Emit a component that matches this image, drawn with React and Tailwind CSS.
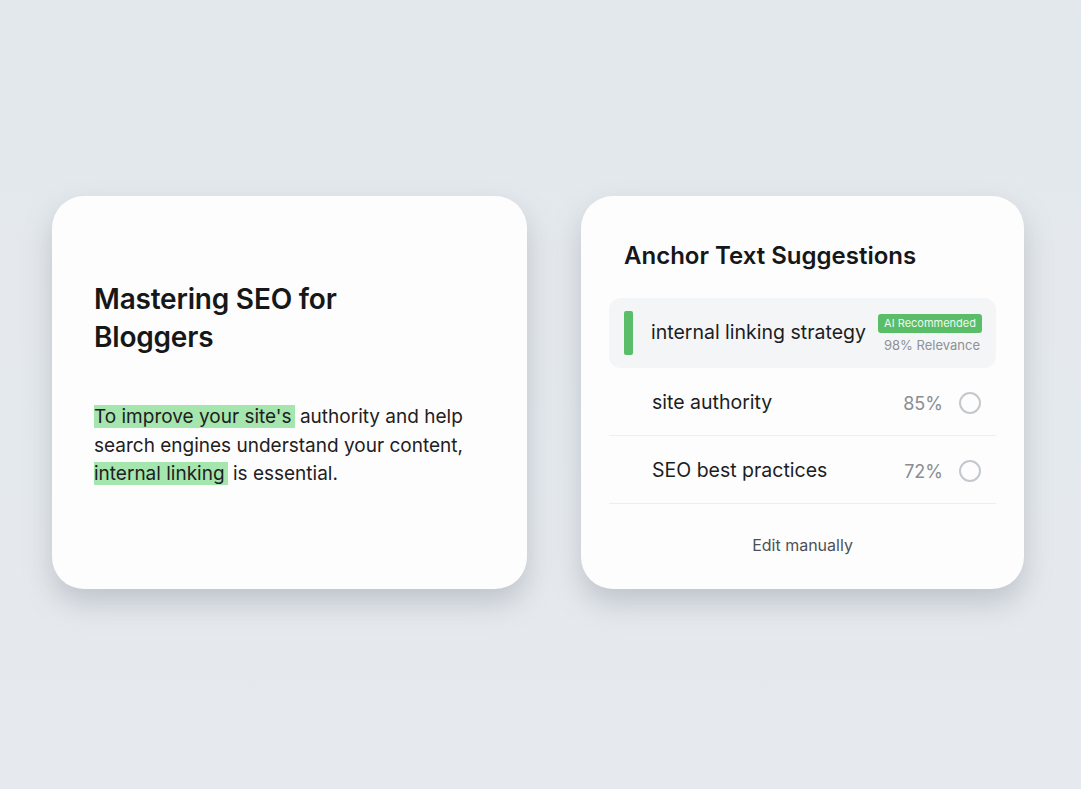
import React from 'react';

const font = { fontFamily: 'Inter, "Noto Sans", sans-serif' };

function Row({ label, pct, last }) {
    return (
        <div className={`flex items-center h-[68px] pl-[43px] pr-[15px] pt-[3px] ${last ? '' : 'border-b border-[#eceef1]'}`}>
            <span className="flex-1 text-[19.5px] text-[#1c1d1f]">{label}</span>
            <span className="text-[18px] text-[#8a8d91] mr-[16px]">{pct}</span>
            <span className="w-[22px] h-[22px] rounded-full border-2 border-[#c4c8cd]" />
        </div>
    );
}

export default function App() {
    return (
        <div className="w-[1081px] h-[789px] bg-gradient-to-b from-[#e3e8ec] to-[#e6eaee] flex items-start pt-[196px] pl-[52px] gap-[54px]" style={font}>
            <div className="w-[475px] h-[393px] rounded-[32px] bg-[#fdfdfd] shadow-[0_14px_28px_rgba(120,130,140,0.35)] pl-[42px] pr-[30px] pt-[84px]">
                <h1 className="text-[28px] leading-[38px] font-semibold text-[#161718] tracking-[-0.2px] w-[300px]">
                    Mastering SEO for Bloggers
                </h1>
                <p className="mt-[47px] text-[19px] leading-[28.5px] text-[#1f2022]">
                    <span className="bg-[#a4e6ad] pr-[3px]">To improve your site's</span> authority and help search engines understand your content,{' '}
                    <span className="bg-[#a4e6ad] pr-[3px]">internal linking</span> is essential.
                </p>
            </div>

            <div className="w-[443px] h-[393px] rounded-[32px] bg-[#fdfdfd] shadow-[0_14px_28px_rgba(120,130,140,0.35)] px-[28px] pt-[44px]">
                <h2 className="pl-[15px] text-[24px] leading-[32px] font-semibold text-[#161718]">Anchor Text Suggestions</h2>
                <div className="mt-[26px] h-[70px] rounded-[12px] bg-[#f4f5f7] flex items-center pl-[15px] pr-[14px]">
                    <span className="w-[9px] h-[44px] rounded-[2px] bg-[#5abd68]" />
                    <span className="ml-[18px] flex-1 text-[19.5px] text-[#1c1d1f]">internal linking strategy</span>
                    <div className="flex flex-col items-end gap-[5px]">
                        <span className="bg-[#5abd68] text-[#eef8ef] text-[11px] leading-[19px] px-[6px] rounded-[3px]">AI Recommended</span>
                        <span className="text-[13px] leading-[15px] text-[#8e9196] pr-[2px]">98% Relevance</span>
                    </div>
                </div>
                <Row label="site authority" pct="85%" />
                <Row label="SEO best practices" pct="72%" last={false} />
                <div className="text-center text-[16px] text-[#4d5055] mt-[29px]">Edit manually</div>
            </div>
        </div>
    );
}
